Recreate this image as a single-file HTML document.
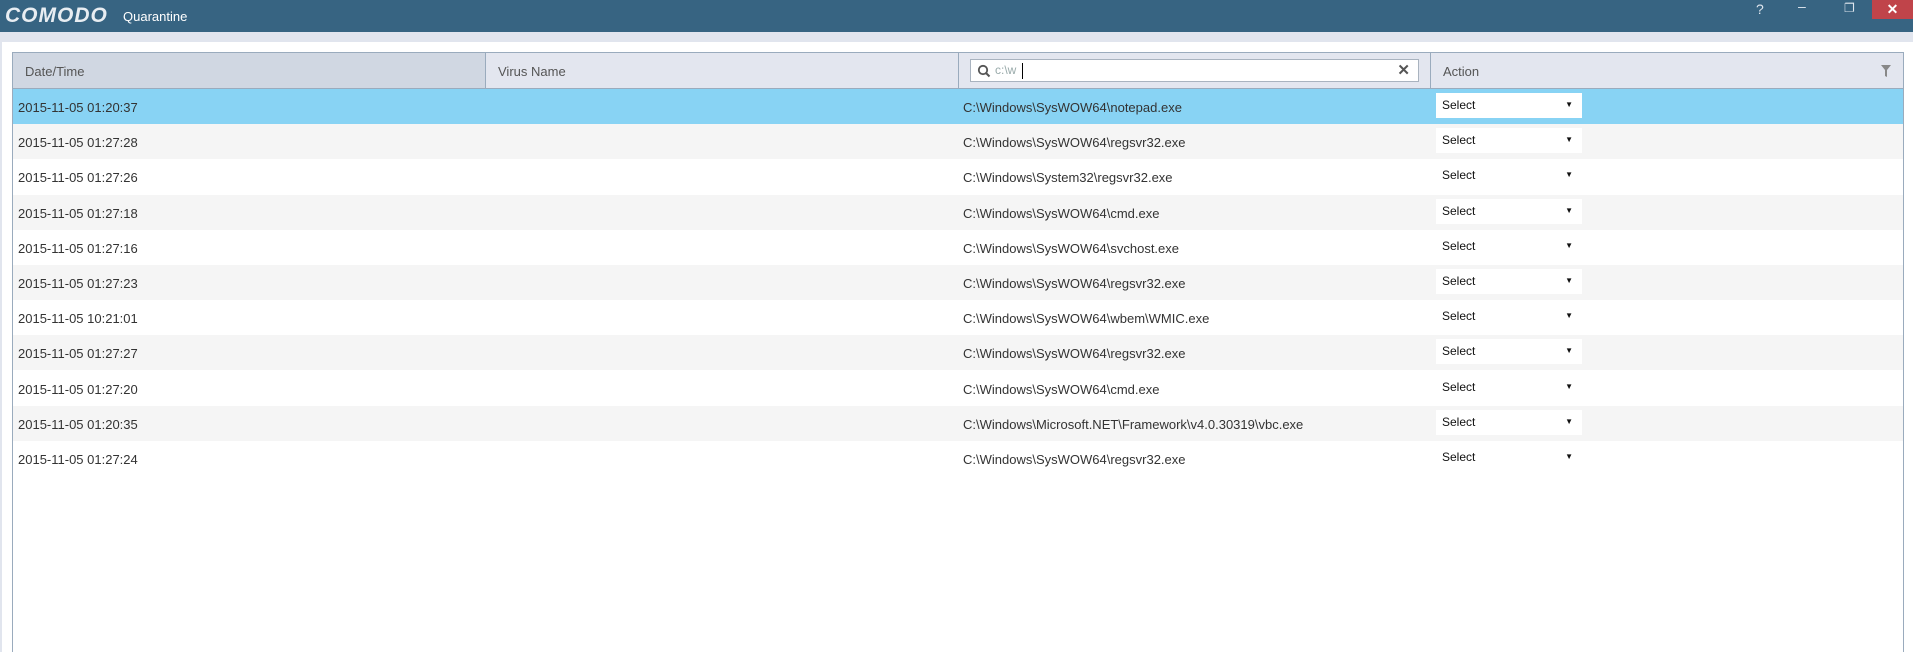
<!DOCTYPE html>
<html><head><meta charset="utf-8"><style>
*{margin:0;padding:0;box-sizing:border-box}
body{width:1913px;height:652px;overflow:hidden;background:#fff;font-family:"Liberation Sans",sans-serif;font-size:13px;color:#333;position:relative}
.title{position:absolute;left:0;top:0;width:1913px;height:32px;background:#376482}
.logo{position:absolute;left:5px;top:4px;color:#e8edf2;font-weight:bold;font-style:italic;font-size:21px;letter-spacing:1px}
.qt{position:absolute;left:123px;top:9px;color:#fff;font-size:13px}
.tb{position:absolute;top:0;color:#dfe6ee;font-size:14px}
.close{position:absolute;left:1872px;top:0;width:41px;height:19px;background:#c0444a;color:#fff;text-align:center;font-weight:bold;font-size:14px;line-height:18px}
.band{position:absolute;left:0;top:32px;width:1913px;height:10px;background:#e1e5ee}
.lstrip{position:absolute;left:0;top:42px;width:2px;height:610px;background:#e1e5ee}
.table{position:absolute;left:12px;top:52px;width:1892px;height:600px;border:1px solid #9aabbd;border-bottom:none}
.hdr{position:absolute;left:0;top:0;width:1890px;height:36px;background:#e3e6ef;border-bottom:1px solid #9aabbd}
.h{position:absolute;top:1px;height:35px;line-height:35px;padding-left:12px;color:#555}
.div{position:absolute;top:0;width:1px;height:35px;background:#9aabbd}
.search{position:absolute;left:957px;top:6px;width:449px;height:23px;background:#fff;border:1px solid #a9b3bf}
.row{position:absolute;left:0;width:1890px;height:35px;line-height:37px}
.row span{position:absolute;top:0}
.sel{position:absolute;left:1423px;top:4px;width:146px;height:25px;background:#fff;line-height:24px;padding-left:6px;color:#111;font-size:12px}
.sel:after{content:"▼";position:absolute;right:9px;top:0;font-size:8px}
</style></head><body>
<div class="title"><div class="logo">COMODO</div><div class="qt">Quarantine</div>
<div class="tb" style="left:1756px;top:1px">?</div>
<div class="tb" style="left:1798px;top:-2px">–</div>
<div class="tb" style="left:1844px;top:1px;font-size:12px">❐</div>
<div class="close">✕</div></div>
<div class="band"></div><div class="lstrip"></div>
<div class="table">
<div class="hdr">
<div style="position:absolute;left:0;top:0;width:472px;height:35px;background:#d0d7e2"></div>
<div class="h" style="left:0">Date/Time</div>
<div class="div" style="left:472px"></div>
<div class="h" style="left:473px">Virus Name</div>
<div class="div" style="left:945px"></div>
<div class="search">
<svg style="position:absolute;left:6px;top:4px" width="14" height="14" viewBox="0 0 14 14"><circle cx="6" cy="6" r="4.2" fill="none" stroke="#555" stroke-width="1.8"/><path d="M9 9 L12.5 12.5" stroke="#555" stroke-width="2"/></svg>
<span style="position:absolute;left:24px;top:3px;color:#9aa;font-size:12px">c:\w</span><span style="position:absolute;left:51px;top:3px;width:1px;height:16px;background:#000"></span>
<span style="position:absolute;right:8px;top:1px;color:#555;font-weight:bold;font-size:15px">✕</span></div>
<div class="div" style="left:1417px"></div>
<div class="h" style="left:1418px">Action</div>
<svg style="position:absolute;left:1868px;top:12px" width="10" height="12" viewBox="0 0 10 12"><path d="M0 0 H10 L6 5 V12 L4 11 V5 Z" fill="#888"/></svg>
</div>
<div id="rows"></div>
</div>
<script>
var d=[["2015-11-05 01:20:37","C:\\Windows\\SysWOW64\\notepad.exe"],["2015-11-05 01:27:28","C:\\Windows\\SysWOW64\\regsvr32.exe"],["2015-11-05 01:27:26","C:\\Windows\\System32\\regsvr32.exe"],["2015-11-05 01:27:18","C:\\Windows\\SysWOW64\\cmd.exe"],["2015-11-05 01:27:16","C:\\Windows\\SysWOW64\\svchost.exe"],["2015-11-05 01:27:23","C:\\Windows\\SysWOW64\\regsvr32.exe"],["2015-11-05 10:21:01","C:\\Windows\\SysWOW64\\wbem\\WMIC.exe"],["2015-11-05 01:27:27","C:\\Windows\\SysWOW64\\regsvr32.exe"],["2015-11-05 01:27:20","C:\\Windows\\SysWOW64\\cmd.exe"],["2015-11-05 01:20:35","C:\\Windows\\Microsoft.NET\\Framework\\v4.0.30319\\vbc.exe"],["2015-11-05 01:27:24","C:\\Windows\\SysWOW64\\regsvr32.exe"]];
var h="";d.forEach(function(r,i){var bg=i==0?"#88d3f4":(i%2?"#f5f5f5":"#fff");
h+='<div class="row" style="top:'+(36+i*35.2)+'px;background:'+bg+'"><span style="left:5px">'+r[0]+'</span><span style="left:950px">'+r[1]+'</span><div class="sel">Select</div></div>';});
document.getElementById("rows").innerHTML=h;
</script>
</body></html>
